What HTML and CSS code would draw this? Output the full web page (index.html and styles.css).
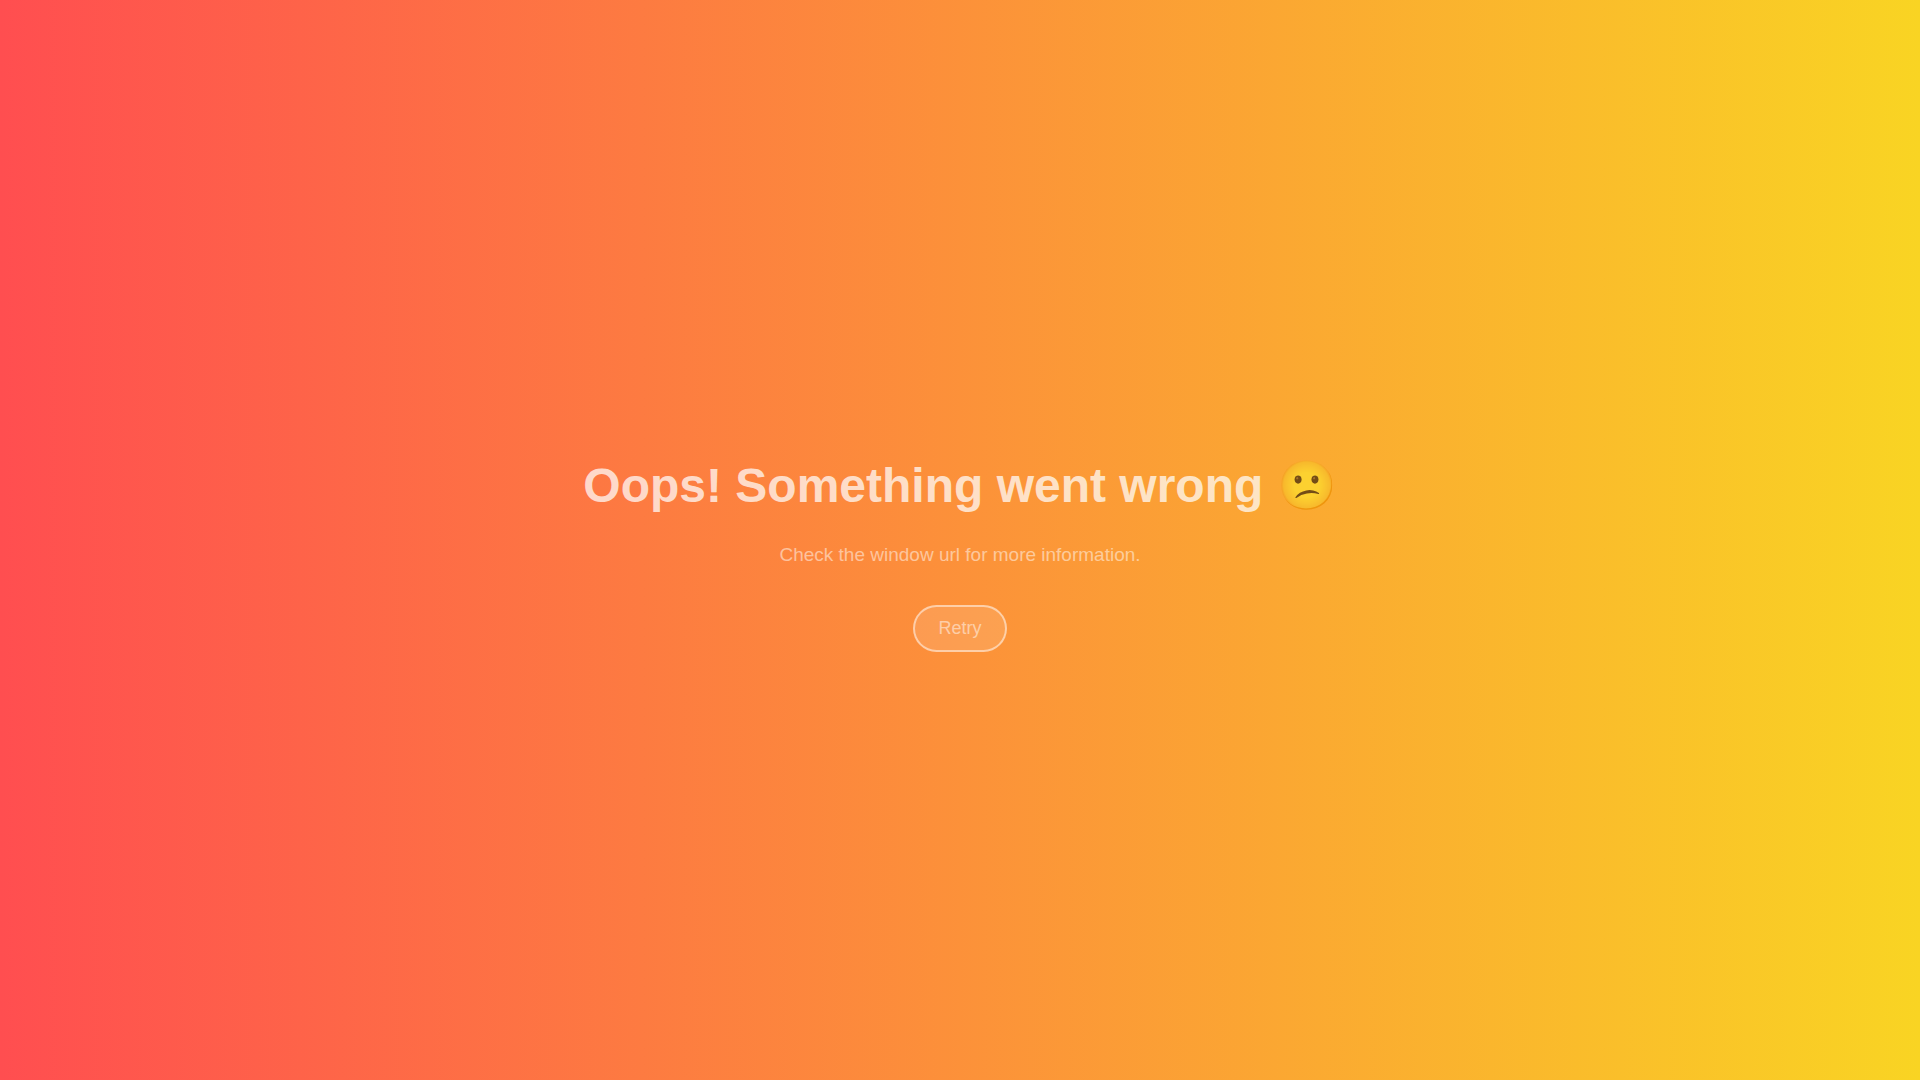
FILE: index.html
```html
<!DOCTYPE html>
<html lang="en">
<head>
  <meta charset="utf-8">
  <meta name="viewport" content="width=device-width, initial-scale=1">
  <title>Something went wrong</title>
  <link rel="stylesheet" href="styles.css">
</head>
<body>
  <main class="error">
    <h1 class="error-title">Oops! Something went wrong 😕</h1>
    <p class="error-text">Check the window url for more information.</p>
    <button class="retry" type="button">Retry</button>
  </main>
</body>
</html>
```

FILE: styles.css
```css
body {
  margin: 0;
  font-family: "Liberation Sans", Arial, sans-serif;
  background: linear-gradient(to right, #ff4e50, #f9d423);
}

.error {
  min-height: 100vh;
  display: flex;
  flex-direction: column;
  align-items: center;
  justify-content: center;
  text-align: center;
}

.error-title {
  margin: 30px 0;
  font-size: 48px;
  line-height: 56px;
  color: rgba(255, 255, 255, 0.73);
}

.error-text {
  margin: 0 0 39px;
  font-size: 19px;
  line-height: 22px;
  color: rgba(255, 255, 255, 0.5);
}

.retry {
  padding: 11px 23px;
  border: 2px solid rgba(255, 255, 255, 0.5);
  border-radius: 24px;
  background: rgba(255, 255, 255, 0.12);
  font-family: inherit;
  font-size: 18px;
  line-height: 21px;
  color: rgba(255, 255, 255, 0.5);
  cursor: pointer;
}
```
